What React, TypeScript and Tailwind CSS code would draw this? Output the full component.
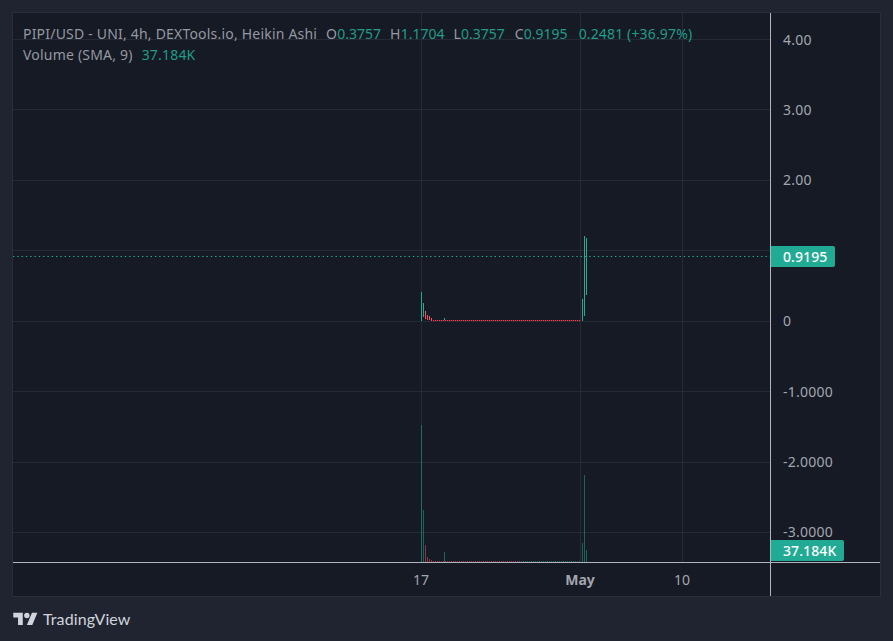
const GREEN = "#22ab94";
const RED = "#f7525f";

const gridY = [39.5, 109.5, 180.5, 250.5, 321.5, 391.5, 462.5, 532.5];
const gridX = [421.5, 580.5, 682.5];

// [x, top, bottom]
const greenCandles = [
  [421, 292, 321],
  [423, 303, 317],
  [444, 318, 321],
  [582, 299, 321],
  [584, 236, 316],
  [586, 238, 295],
];
const redCandles = [
  [425, 311, 319],
  [427, 315, 320],
  [429, 316, 320],
  [431, 318, 321],
];
const greenVolume = [
  [421, 425, 562],
  [423, 510, 562],
  [444, 552, 562],
  [582, 543, 562],
  [584, 475, 562],
  [586, 550, 562],
];
const redVolume = [
  [425, 545, 562],
  [427, 557, 562],
  [429, 559, 562],
  [431, 560, 562],
];

const flatBars: number[] = [];
for (let x = 433; x < 581; x += 2) {
  if (x !== 444) flatBars.push(x);
}

function Bars({ data, color, opacity = 1 }: { data: number[][]; color: string; opacity?: number }) {
  return (
    <>
      {data.map(([x, top, bottom]) => (
        <rect key={x} x={x} y={top} width={1} height={bottom - top} fill={color} opacity={opacity} />
      ))}
    </>
  );
}

function Chart() {
  return (
    <svg className="block w-full h-full" viewBox="13 13 757 549" shapeRendering="crispEdges">
      {gridY.map((y) => (
        <line key={y} x1={13} x2={770} y1={y} y2={y} stroke="#262a35" />
      ))}
      {gridX.map((x) => (
        <line key={x} x1={x} x2={x} y1={13} y2={562} stroke="#262a35" />
      ))}

      <Bars data={greenVolume} color={GREEN} opacity={0.5} />
      <Bars data={redVolume} color={RED} opacity={0.5} />
      {flatBars.map((x) => (
        <rect
          key={x}
          x={x}
          y={561}
          width={1}
          height={1}
          fill={x > 520 ? GREEN : RED}
          opacity={0.5}
        />
      ))}

      <line
        x1={13}
        x2={770}
        y1={256.5}
        y2={256.5}
        stroke={GREEN}
        strokeDasharray="1.4 2.9"
        shapeRendering="auto"
      />

      <Bars data={greenCandles} color={GREEN} />
      <Bars data={redCandles} color={RED} />
      <rect x={433} y={320} width={148} height={1} fill="#5a2630" />
      {flatBars.map((x) => (
        <rect key={x} x={x} y={320} width={1} height={1} fill="#ff3b50" />
      ))}
    </svg>
  );
}

function Ohlc({ label, value }: { label: string; value: string }) {
  return (
    <span className="ml-[9px] last-of-type:ml-[10px]">
      {label}
      <span className="tracking-normal text-[#1f9d88]">{value}</span>
    </span>
  );
}

function Legend() {
  return (
    <div className="absolute left-[10px] top-[10px] text-[14px] leading-[21px] tracking-[0.2px] text-[#9598a1] whitespace-nowrap">
      <div>
        <span>PIPI/USD - UNI, 4h, DEXTools.io, Heikin Ashi</span>
        <Ohlc label="O" value="0.3757" />
        <Ohlc label="H" value="1.1704" />
        <Ohlc label="L" value="0.3757" />
        <Ohlc label="C" value="0.9195" />
        <em className="ml-[11px] not-italic tracking-[0.15px] text-[#1f9d88]">0.2481 (+36.97%)</em>
      </div>
      <div>
        <span>Volume (SMA, 9)</span>
        <span className="ml-[9px] text-[#1f9d88]">37.184K</span>
      </div>
    </div>
  );
}

function PriceBadge({ text, className }: { text: string; className: string }) {
  return (
    <div
      className={`absolute left-0 h-[21px] rounded-r-[2px] bg-[#22ab94] pl-[12px] pr-[8px] text-[14px] leading-[21px] font-medium tracking-[0.1px] text-white ${className}`}
    >
      {text}
    </div>
  );
}

const prices = ["4.00", "3.00", "2.00", "1.00", "0", "-1.0000", "-2.0000", "-3.0000"];

function PriceAxis() {
  return (
    <div className="relative w-[110px] shrink-0 border-l border-[#b2b5be] pt-[17.8px] pl-[12px] text-[14px] leading-[17px] tracking-[0.25px] text-[#a3a6af]">
      {prices.map((p) => (
        <div key={p} className="h-[70.35px]">
          {p}
        </div>
      ))}
      <PriceBadge text="0.9195" className="top-[233px]" />
      <PriceBadge text="37.184K" className="top-[527px]" />
    </div>
  );
}

function TimeAxis() {
  return (
    <div className="flex h-[34px] border-t border-[#b2b5be] text-[14px] leading-[34px] text-[#a3a6af]">
      <div className="flex flex-1 pl-[388px]">
        <span className="w-[40px] text-center">17</span>
        <span className="ml-[119px] w-[40px] text-center font-bold">May</span>
        <span className="ml-[62px] w-[40px] text-center">10</span>
      </div>
      <div className="w-[110px] border-l border-[#b2b5be]" />
    </div>
  );
}

function TradingViewMark() {
  return (
    <div className="flex h-[44px] items-center pl-[1px] text-[#d1d4dc]">
      <svg width="25" height="19" viewBox="0 0 36 28" fill="currentColor">
        <path d="M14 22H7V11H0V4h14v18zM28 22h-8l7.5-18h8L28 22z" />
        <circle cx="20" cy="8" r="4" />
      </svg>
      <span className="ml-[5px] font-['Lato',sans-serif] text-[16px] tracking-[0.1px]">TradingView</span>
    </div>
  );
}

export default function App() {
  return (
    <div className="h-[641px] w-[893px] overflow-hidden bg-[#1f2430] px-3 pt-3 font-['Noto_Sans',sans-serif]">
      <div className="border border-[#2a2e39] bg-[#161a25]">
        <div className="flex h-[549px]">
          <div className="relative flex-1">
            <Chart />
            <Legend />
          </div>
          <PriceAxis />
        </div>
        <TimeAxis />
      </div>
      <TradingViewMark />
    </div>
  );
}
